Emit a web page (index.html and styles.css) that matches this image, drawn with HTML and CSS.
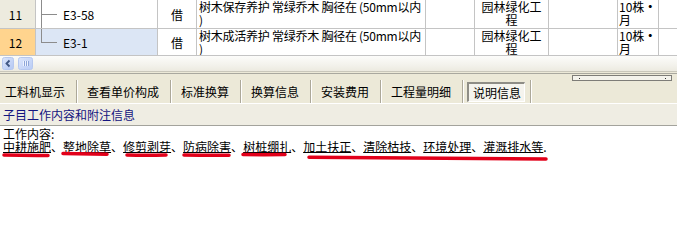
FILE: index.html
```html
<!DOCTYPE html>
<html lang="zh-CN">
<head>
<meta charset="utf-8">
<title>子目工作内容和附注信息</title>
<link rel="stylesheet" href="styles.css">
</head>
<body>
<div class="grid">
  <div class="row r11">
    <div class="c num">11</div>
    <div class="c code tree-mid"><span>E3-58</span></div>
    <div class="c unit">借</div>
    <div class="c desc">树木保存养护 常绿乔木 胸径在 (50mm以内<br>)</div>
    <div class="c"></div>
    <div class="c type">园林绿化工<br>程</div>
    <div class="c"></div>
    <div class="c qty">10株<span class="dot">·</span><br>月</div>
    <div class="c last"></div>
  </div>
  <div class="row r12">
    <div class="c num sel">12</div>
    <div class="c code tree-end cur"><span>E3-1</span></div>
    <div class="c unit">借</div>
    <div class="c desc">树木成活养护 常绿乔木 胸径在 (50mm以内<br>)</div>
    <div class="c"></div>
    <div class="c type">园林绿化工<br>程</div>
    <div class="c"></div>
    <div class="c qty">10株<span class="dot">·</span><br>月</div>
    <div class="c last"></div>
  </div>
</div>

<div class="lower">
  <div class="hscroll">
    <div class="sbtn">
      <svg width="12" height="13" viewBox="0 0 12 13">
        <defs>
          <linearGradient id="bg1" x1="0" y1="0" x2="1" y2="1">
            <stop offset="0" stop-color="#DCE6FC"/>
            <stop offset="1" stop-color="#B3C7F2"/>
          </linearGradient>
        </defs>
        <rect x="0.5" y="0.5" width="11" height="12" rx="2" fill="url(#bg1)" stroke="#B6C8EF"/>
        <path d="M7.5 3.5 L4.5 6.5 L7.5 9.5" fill="none" stroke="#3F5683" stroke-width="1.8"/>
      </svg>
    </div>
    <div class="sthumb">
      <svg width="15" height="13" viewBox="0 0 15 13">
        <defs>
          <linearGradient id="bg2" x1="0" y1="0" x2="1" y2="1">
            <stop offset="0" stop-color="#DCE6FC"/>
            <stop offset="1" stop-color="#B9CCF5"/>
          </linearGradient>
        </defs>
        <rect x="0.5" y="0.5" width="14" height="12" rx="2" fill="url(#bg2)" stroke="#B6C8EF"/>
        <path d="M5.5 4 V9 M7.5 4 V9 M9.5 4 V9" stroke="#EEF3FE" stroke-width="1"/>
        <path d="M6.5 4 V9 M8.5 4 V9 M10.5 4 V9" stroke="#8DA5D8" stroke-width="1"/>
      </svg>
    </div>
  </div>

  <div class="tabs">
    <div class="tab first">工料机显示</div>
    <div class="tab">查看单价构成</div>
    <div class="tab">标准换算</div>
    <div class="tab">换算信息</div>
    <div class="tab">安装费用</div>
    <div class="tab">工程量明细</div>
    <div class="tab active"><span class="box">说明信息</span></div>
    <div class="mini"><span class="pip"></span><span class="pip"></span></div>
  </div>

  <div class="subhdr">子目工作内容和附注信息</div>
</div>

<div class="content">
  <div class="line">工作内容:</div>
  <div class="line"><span class="u">中耕施肥</span>、<span class="u">整地除草</span>、<span class="u">修剪剥芽</span>、<span class="u">防病除害</span>、<span class="u">树桩绷扎</span>、<span class="u">加土扶正</span>、<span class="u">清除枯技</span>、<span class="u">环境处理</span>、<span class="u">灌溉排水等</span>.</div>
  <svg class="marks" width="677" height="89" viewBox="0 0 677 89">
    <g fill="none" stroke="#E2001A" stroke-width="3.5" stroke-linecap="round">
      <path d="M4 29 Q26 29.6 48 29.4"/>
      <path d="M63 27.6 Q85 27.9 107 28.2"/>
      <path d="M127 29 Q146 29.4 166 29"/>
      <path d="M184 29 Q206 29.5 229 29.3"/>
      <path d="M243 28.6 Q264 28.9 285 28.6"/>
      <path d="M309 31.2 Q430 32.6 546 33"/>
    </g>
  </svg>
</div>
</body>
</html>
```

FILE: styles.css
```css
* { box-sizing: border-box; }

html, body {
  margin: 0;
  padding: 0;
  background: #ffffff;
}

body {
  width: 677px;
  height: 215px;
  overflow: hidden;
  font-family: "Noto Sans CJK SC", "Noto Sans", sans-serif;
  font-size: 12px;
  color: #000;
}

/* ---------- grid ---------- */
.grid {
  width: 677px;
  overflow: hidden;
}

.row {
  display: grid;
  grid-template-columns: 36px 122px 39px 229px 49px 74px 69px 41px 1fr;
}

.r11 { height: 29px; }
.r12 { height: 27px; }

.c {
  border-right: 1px solid #C4C4C4;
  border-bottom: 1px solid #C4C4C4;
  padding: 0 2px;
  line-height: 13px;
  white-space: nowrap;
  overflow: hidden;
  background: #fff;
}

.c.last { border-right: none; }

.num {
  background: #EDEBDF;
  display: flex;
  align-items: center;
  justify-content: center;
  padding: 0 4px 0 0;
}

.num.sel { background: #FFD48E; }

.code {
  display: flex;
  align-items: center;
  padding: 0 0 0 27px;
}

.code.cur { background-color: #DCE6F5; }

.tree-mid {
  background-image:
    linear-gradient(#8C8C8C, #8C8C8C),
    linear-gradient(#8C8C8C, #8C8C8C);
  background-repeat: no-repeat;
  background-position: 5px 0, 5px 14px;
  background-size: 1px 100%, 16px 1px;
}

.tree-end {
  background-image:
    linear-gradient(#8C8C8C, #8C8C8C),
    linear-gradient(#8C8C8C, #8C8C8C);
  background-repeat: no-repeat;
  background-position: 5px 0, 5px 13px;
  background-size: 1px 14px, 16px 1px;
}

.unit {
  display: flex;
  align-items: center;
  justify-content: center;
  padding: 0;
}

.desc {
  padding-left: 2px;
  letter-spacing: -0.25px;
}

.type {
  text-align: center;
  padding-left: 0;
  padding-right: 0;
}

.qty { padding-left: 1px; }

.dot {
  display: inline-block;
  width: 12px;
  text-align: center;
  font-weight: bold;
}

/* ---------- lower panel ---------- */
.lower {
  background: #ECE9D8;
}

.hscroll {
  height: 16px;
  display: flex;
  align-items: center;
  gap: 4px;
  padding-left: 2px;
  background: linear-gradient(#FCFCFA, #F3F2EC 60%, #ECEAE0);
  border-bottom: 1px solid #C9C7BB;
}

.sbtn, .sthumb {
  display: flex;
  height: 13px;
}

.tabs {
  margin-top: 1px;
  height: 30px;
  border-top: 1px solid #A9A89F;
  display: flex;
  align-items: flex-start;
}

.tab {
  margin-top: 6px;
  height: 23px;
  line-height: 23px;
  padding: 0 11px 0 9px;
  margin-right: 1px;
  border-right: 1px solid #ACA899;
  box-shadow: 1px 0 0 #FFFFFF;
  white-space: nowrap;
}

.tab.first { padding-left: 5px; }

.tab.active {
  padding: 0 5px 0 3px;
}

.tab.active .box {
  display: block;
  margin-top: 2px;
  height: 20px;
  line-height: 17px;
  padding: 0 3px 0 4px;
  background: #F5F4EE;
  border-top: 2px solid #8E8D86;
  border-left: 2px solid #8E8D86;
  border-right: 1px solid #FFFFFF;
  border-bottom: 1px solid #FFFFFF;
}

.mini {
  margin-left: auto;
  margin-right: 5px;
  margin-top: 1px;
  width: 100px;
  height: 6px;
  border: 1px solid #7E7D78;
  background: #F4F3EC;
  display: flex;
  justify-content: space-between;
  align-items: center;
  padding: 0 5px 0 6px;
}

.pip {
  width: 1px;
  height: 1px;
  background: #333;
}

.subhdr {
  height: 23px;
  border-top: 1px solid #FFFFFF;
  border-bottom: 1px solid #A3A39C;
  background: #EFEDE3;
  color: #141480;
  line-height: 21px;
  padding-left: 3px;
}

/* ---------- content ---------- */
.content {
  position: relative;
  padding: 1px 3px 0 3px;
  height: 89px;
  background: #fff;
}

.line {
  line-height: 13px;
  white-space: nowrap;
}

.u {
  text-decoration: underline;
  text-underline-offset: 0px;
  text-decoration-thickness: 1px;
}

.marks {
  position: absolute;
  left: 0;
  top: 0;
  pointer-events: none;
}
```
